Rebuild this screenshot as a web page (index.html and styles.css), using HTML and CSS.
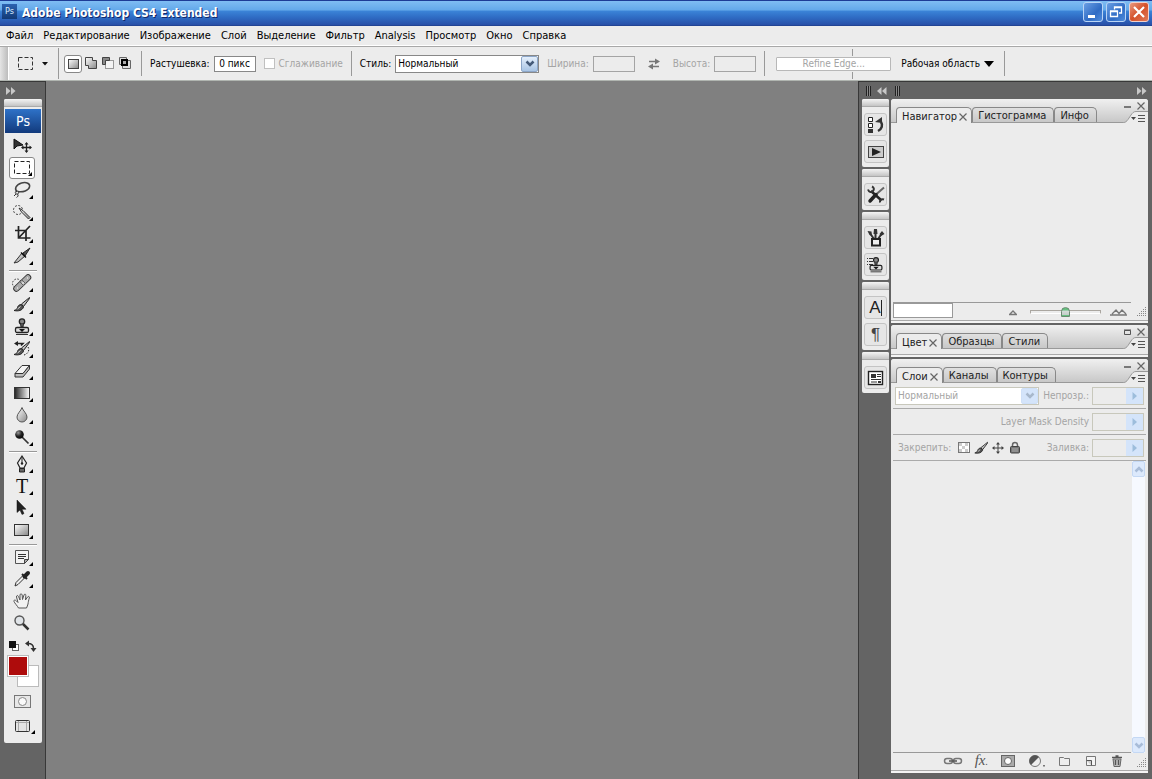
FILE: index.html
```html
<!DOCTYPE html>
<html lang="ru">
<head>
    <meta charset="UTF-8">
    <meta name="viewport" content="width=device-width, initial-scale=1.0">
    <title>Adobe Photoshop CS4 Extended</title>
    <link rel="stylesheet" href="styles.css">
</head>
<body>
    <!-- shared gradients and small symbols -->
    <svg class="defs" width="0" height="0" aria-hidden="true">
        <defs>
            <linearGradient id="metal" x1="0" y1="0" x2="1" y2="1">
                <stop offset="0" stop-color="#fff"/>
                <stop offset="1" stop-color="#888"/>
            </linearGradient>
            <linearGradient id="bw" x1="0" y1="0" x2="1" y2="0">
                <stop offset="0" stop-color="#222"/>
                <stop offset="1" stop-color="#fff"/>
            </linearGradient>
            <radialGradient id="ball" cx=".35" cy=".3" r=".8">
                <stop offset="0" stop-color="#999"/>
                <stop offset=".5" stop-color="#222"/>
                <stop offset="1" stop-color="#000"/>
            </radialGradient>
        </defs>
        <symbol id="i-brush" viewBox="0 0 22 22">
            <path d="M18.500 3.500L10.500 10l2 2.500 6-8z" fill="url(#metal)" stroke="#222"/>
            <path d="M10.500 10.500c-2 0-3.500 1-4 3-.5 1.500-1.500 2.500-3.500 3 4 1 8.500 0 9.500-3.500z" fill="#555" stroke="#222"/>
            <path d="M6.500 15l3-2.500" stroke="#ddd"/>
        </symbol>
        <symbol id="i-stamp" viewBox="0 0 22 22">
            <circle cx="11" cy="5.500" r="2.700" fill="#888" stroke="#222" stroke-width="1.300"/>
            <path d="M9.500 8l.5 3h2l.5-3" fill="#555" stroke="#333"/>
            <rect x="4.500" y="11.500" width="13" height="5" rx="1.500" fill="#ddd" stroke="#222" stroke-width="1.300"/>
            <path d="M8 13h6l-3 3z" fill="#111"/>
            <path d="M5 18.500h12" stroke="#333"/>
        </symbol>
        <symbol id="i-menu" viewBox="0 0 26 12">
            <path d="M0 11.500h1.500c2 0 3-1 4.500-3l3-4.500C10.500 2 11.500 .5 14 .5h12V12H0z" fill="#ececec"/>
            <path d="M0 11.500h1.500c2 0 3-1 4.500-3l3-4.500C10.500 2 11.500 .5 14 .5h12" fill="none" stroke="#999"/>
            <path d="M9 6h5l-2.500 3z" fill="#444"/>
            <path d="M16 4.500h7M16 7.500h7M16 10.500h7" stroke="#555"/>
        </symbol>
        <symbol id="i-min" viewBox="0 0 8 8"><path d="M0 5h7" stroke="#555" stroke-width="1.500"/></symbol>
        <symbol id="i-max" viewBox="0 0 8 8"><path d="M.5 2.500h6v4h-6zM0 2h7" fill="none" stroke="#555"/></symbol>
        <symbol id="i-x" viewBox="0 0 8 8"><path d="M.5 .5l7 7M7.500 .5l-7 7" stroke="#666" stroke-width="1.200"/></symbol>
        <symbol id="i-chev" viewBox="0 0 10 7"><path d="M1.500 1.500L5 5l3.500-3.500" fill="none" stroke="currentColor" stroke-width="2.500"/></symbol>
        <symbol id="i-right" viewBox="0 0 6 8"><path d="M.5 0L5 4 .5 8z" fill="#9dbddc"/></symbol>
        <symbol id="i-grow" viewBox="0 0 10 10"><path d="M9.500 0v10M7.500 2v8M5.500 4v6M3.500 6v4M1.500 8v2" stroke="#888" stroke-dasharray="1 1"/></symbol>
        <symbol id="i-fwd" viewBox="0 0 10 8"><path d="M0 0l4.500 4L0 8zM5 0l4.500 4L5 8z" fill="#c8c8c8"/></symbol>
        <symbol id="i-back" viewBox="0 0 10 8"><path d="M4.500 0L0 4l4.500 4zM9.500 0L5 4l4.500 4z" fill="#c8c8c8"/></symbol>
    </svg>

    <div class="app">
        <header class="titlebar">
            <span class="app-icon">Ps</span>
            <h1>Adobe Photoshop CS4 Extended</h1>
            <div class="window-buttons">
                <button class="win-btn" aria-label="Свернуть"><svg width="14" height="14"><path d="M2 11.500h7" stroke="#fff" stroke-width="3"/></svg></button>
                <button class="win-btn" aria-label="Восстановить"><svg width="14" height="14"><path d="M5.500 4.500V2h7v6H10M5 2.500h8" fill="none" stroke="#fff" stroke-width="1.300"/><path d="M1.500 6.500h7v5h-7zM1 6h8" fill="none" stroke="#fff" stroke-width="1.300"/></svg></button>
                <button class="win-btn close" aria-label="Закрыть"><svg width="14" height="14"><path d="M2 2l10 10M12 2L2 12" stroke="#fff" stroke-width="2.200"/></svg></button>
            </div>
        </header>

        <nav class="menubar">
            <button>Файл</button>
            <button>Редактирование</button>
            <button>Изображение</button>
            <button>Слой</button>
            <button>Выделение</button>
            <button>Фильтр</button>
            <button>Analysis</button>
            <button>Просмотр</button>
            <button>Окно</button>
            <button>Справка</button>
        </nav>

        <div class="options">
            <span class="handle"></span>
            <button class="preset" aria-label="Набор инструментов">
                <svg width="32" height="16"><rect x="1.500" y="1.500" width="14" height="12" fill="none" stroke="#333" stroke-dasharray="4 2"/><path d="M25 6h6l-3 3.500z" fill="#111"/></svg>
            </button>
            <div class="modes">
                <button class="mode on" aria-label="Новая область"><svg width="14" height="14"><rect x="2.500" y="2.500" width="10" height="9" fill="url(#metal)" stroke="#444"/></svg></button>
                <button class="mode" aria-label="Добавить"><svg width="14" height="14"><path d="M1.500 .5h7v3h4v8h-8v-3h-3z" fill="url(#metal)" stroke="#444"/></svg></button>
                <button class="mode" aria-label="Вычесть"><svg width="14" height="14"><rect x="4.500" y="3.500" width="8" height="8" fill="#f4f4f4" stroke="#999"/><path d="M1.500 7.500v-7h7v3h-4v4z" fill="#888" stroke="#444"/></svg></button>
                <button class="mode" aria-label="Пересечь"><svg width="14" height="14"><path d="M1.500 .5h7v7h-7zM4.500 3.500h8v8h-8z" fill="#ddd" stroke="#666"/><rect x="4" y="3" width="5" height="5" fill="#aaa" stroke="#000" stroke-width="2"/></svg></button>
            </div>
            <div class="group">
                <label for="feather">Растушевка:</label>
                <input class="box filled" id="feather" type="text" value="0 пикс">
                <input class="check" id="alias" type="checkbox" disabled>
                <label class="off" for="alias">Сглаживание</label>
            </div>
            <div class="group">
                <label for="style">Стиль:</label>
                <span class="combo">
                    <select id="style"><option>Нормальный</option></select>
                    <span class="drop"><svg width="10" height="7"><use href="#i-chev"/></svg></span>
                </span>
                <label class="off" for="w">Ширина:</label>
                <input class="box" id="w" type="text" disabled>
                <button class="swap" aria-label="Поменять местами"><svg width="14" height="12"><path d="M2 3.500h7M5 8.500h7" stroke="#777" stroke-width="1.500"/><path d="M8 .5l5 3-5 3zM6 5.500l-5 3 5 3z" fill="#777"/></svg></button>
                <label class="off" for="h">Высота:</label>
                <input class="box" id="h" type="text" disabled>
            </div>
            <div class="group edge">
                <button class="refine" disabled>Refine Edge...</button>
                <button class="workspace">Рабочая область <svg width="10" height="6"><path d="M0 0h10L5 6z" fill="#000"/></svg></button>
            </div>
        </div>

        <div class="main">
            <aside class="left-dock">
                <button class="dock-head" aria-label="Развернуть"><svg width="10" height="8"><use href="#i-fwd"/></svg></button>
                <div class="toolbox">
                    <div class="grip"></div>
                    <div class="ps">Ps</div>
                    <div class="tools">
                        <button class="tool" aria-label="Перемещение"><svg width="22" height="22"><path d="M3 4v10l3-3 6-1z" fill="#333" stroke="#111"/><path d="M15.500 8v9M11 12.500h9" stroke="#222" stroke-width="1.300"/><path d="M15.500 7l2 2.500h-4zM15.500 18l2-2.500h-4zM10 12.500l2.500-2v4zM21 12.500l-2.500-2v4z" fill="#222"/></svg></button>
                        <button class="tool more on" aria-label="Прямоугольная область"><svg width="22" height="22"><rect x="3.500" y="4.500" width="15" height="12" fill="none" stroke="#222" stroke-dasharray="4 2"/></svg></button>
                        <button class="tool more" aria-label="Лассо"><svg width="22" height="22"><path d="M6 13C3 10 5 5.500 10.500 4c5-1.300 9 .7 8 4-1 3.500-6.500 5.500-11.500 4.500" fill="none" stroke="#444" stroke-width="1.500"/><path d="M6 12c-2 0-2.500 3 0 3s2-3 0-3zm.5 3c1.500 1.500 0 3-1 3.500M5 15l-2 2" fill="none" stroke="#333"/></svg></button>
                        <button class="tool more" aria-label="Быстрое выделение"><svg width="22" height="22"><circle cx="7" cy="9" r="4.500" fill="none" stroke="#444" stroke-dasharray="2 1.500"/><path d="M8 7l4 2.500 7 7-1.500 1.500-7-7z" fill="url(#metal)" stroke="#333"/></svg></button>
                        <button class="tool more" aria-label="Рамка"><svg width="22" height="22"><path d="M7.500 3v12h12M4 7.500h11V18M19 3L8 14.500" fill="none" stroke="#222" stroke-width="1.700"/></svg></button>
                        <button class="tool more" aria-label="Раскройка"><svg width="22" height="22"><path d="M19 3l-7 5 2 3z" fill="#555" stroke="#222"/><path d="M11 8L3 18l4-1 7-6z" fill="url(#metal)" stroke="#333"/><path d="M10 7.500l5 5" stroke="#111" stroke-width="1.500"/></svg></button>
                        <hr>
                        <button class="tool more" aria-label="Восстанавливающая кисть"><svg width="22" height="22"><circle cx="6" cy="11.500" r="4.500" fill="none" stroke="#333" stroke-dasharray="1.500 1.500"/><path d="M5.500 16.500L17 5.500" stroke="#333" stroke-width="6.500" stroke-linecap="round"/><path d="M5.500 16.500L17 5.500" stroke="#aaa" stroke-width="4.700" stroke-linecap="round"/><path d="M9 10l4 4M11 8l4 4" stroke="#666"/><path d="M11 11h2M6 16h1M16 6h1" stroke="#fff"/></svg></button>
                        <button class="tool more" aria-label="Кисть"><svg width="22" height="22"><use href="#i-brush"/></svg></button>
                        <button class="tool more" aria-label="Штамп"><svg width="22" height="22"><use href="#i-stamp"/></svg></button>
                        <button class="tool more" aria-label="Архивная кисть"><svg width="22" height="22"><use href="#i-brush"/><path d="M5 5.500h7l-2 2" fill="none" stroke="#222" stroke-width="1.500"/><path d="M3 5.500L7 3v5z" fill="#222"/><path d="M17 9c2 3 0 7-4 8" fill="none" stroke="#222" stroke-dasharray="1.500 1.500"/></svg></button>
                        <button class="tool more" aria-label="Ластик"><svg width="22" height="22"><path d="M4 13.500L11 5.500h7.500L12 13.500z" fill="#f4f4f4" stroke="#333"/><path d="M4 13.500h8l6.500-8v3.500L12 17H4z" fill="#bbb" stroke="#333"/></svg></button>
                        <button class="tool more" aria-label="Градиент"><svg width="22" height="22"><rect x="3.500" y="5.500" width="15" height="11" fill="url(#bw)" stroke="#333"/></svg></button>
                        <button class="tool more" aria-label="Размытие"><svg width="22" height="22"><path d="M11 3.500c1 3.500 5 6 5 9.500a5 5 0 0 1-10 0c0-3.500 4-6 5-9.500z" fill="url(#metal)" stroke="#555"/></svg></button>
                        <button class="tool more" aria-label="Осветлитель"><svg width="22" height="22"><path d="M11 11l6.500 6.500" stroke="#333" stroke-width="1.700"/><circle cx="8.500" cy="8.500" r="4.300" fill="url(#ball)"/></svg></button>
                        <hr>
                        <button class="tool more" aria-label="Перо"><svg width="22" height="22"><path d="M11 3L6.500 10 9 15h4l2.500-5z" fill="#eee" stroke="#222" stroke-width="1.200"/><path d="M11 4v6" stroke="#222"/><circle cx="11" cy="10.500" r="1.200" fill="#222"/><path d="M8.500 15.500h5V19h-5z" fill="#666" stroke="#222"/></svg></button>
                        <button class="tool more type" aria-label="Горизонтальный текст">T</button>
                        <button class="tool more" aria-label="Выделение контура"><svg width="22" height="22"><path d="M6 3v12.500l3-2.500 2 4.500 2-1-2-4.300h4z" fill="#222" stroke="#111" stroke-width=".5"/></svg></button>
                        <button class="tool more" aria-label="Прямоугольник"><svg width="22" height="22"><rect x="3.500" y="5.500" width="14" height="11" fill="url(#metal)" stroke="#333"/></svg></button>
                        <hr>
                        <button class="tool more" aria-label="Комментарий"><svg width="22" height="22"><path d="M4.500 4.500h13v9l-4 4h-9z" fill="#f2f2f2" stroke="#555"/><path d="M7 8.500h8M7 10.500h8M7 12.500h6" stroke="#333"/><path d="M17.500 13.500h-4v4z" fill="#aaa" stroke="#444"/></svg></button>
                        <button class="tool more" aria-label="Пипетка"><svg width="22" height="22"><path d="M4 18l1-3.500 7-7 2 2-7 7z" fill="#eee" stroke="#333"/><path d="M11 6l5 5" stroke="#222" stroke-width="2"/><path d="M13.500 8.500l3.500-3.500" stroke="#222" stroke-width="4" stroke-linecap="round"/></svg></button>
                        <button class="tool" aria-label="Рука"><svg width="22" height="22"><path d="M7.500 18c-1-2-4-5-4.500-6.500s1-2 2.500-.5l1.500 1.500L5.500 7c-.3-1.700 1.500-2 2-.5L9 10V5c0-1.500 2-1.500 2.200 0l.3 4.500L13 5c.5-1.500 2-1 1.800.5L14.500 10l2-3c1-1.200 2.300-.5 1.800 1-.8 2.500-1 4-1.300 6-.3 1.500-1 2.500-1.500 4z" fill="#f2f2f2" stroke="#555"/></svg></button>
                        <button class="tool" aria-label="Масштаб"><svg width="22" height="22"><path d="M11.500 11.500l6 6" stroke="#333" stroke-width="2.500"/><circle cx="8.500" cy="8.500" r="4.500" fill="#e0e4e8" stroke="#555" stroke-width="1.400"/></svg></button>
                    </div>
                    <div class="mini">
                        <button aria-label="Цвета по умолчанию"><svg width="12" height="12"><rect x="4.500" y="4.500" width="6" height="6" fill="#fff" stroke="#666"/><rect x="1" y="1" width="7" height="7" fill="#111"/></svg></button>
                        <button aria-label="Поменять цвета"><svg width="12" height="12"><path d="M3 3.500c4 0 5.500 1.500 5.500 5" fill="none" stroke="#333" stroke-width="1.500"/><path d="M0 3.500L4 .5v6zM8.500 12L5.500 8h6z" fill="#333"/></svg></button>
                    </div>
                    <div class="swatches">
                        <button class="bg" aria-label="Фоновый цвет"></button>
                        <button class="fg" aria-label="Основной цвет"></button>
                    </div>
                    <button class="wide" aria-label="Быстрая маска"><svg width="18" height="14"><rect x=".5" y=".5" width="16" height="12" fill="#e8e8e8" stroke="#777"/><circle cx="8.500" cy="6.500" r="4" fill="#fafafa" stroke="#888"/></svg></button>
                    <button class="wide tool more" aria-label="Режим экрана"><svg width="18" height="14"><rect x="1.500" y="1.500" width="14" height="11" rx="1" fill="#e4e4e4" stroke="#333"/><path d="M2 3.500h13M4.500 2v10M12.500 2v10" stroke="#aaa"/></svg></button>
                </div>
            </aside>

            <main class="canvas"></main>

            <aside class="right-dock">
                <div class="icons-col">
                    <div class="dock-head"><span class="bars"></span><svg width="10" height="8"><use href="#i-back"/></svg></div>
                    <div class="icon-group">
                        <div class="grip"></div>
                        <button aria-label="История"><svg width="20" height="20"><path d="M2.500 2.500h4v4h-4zM2.500 8.500h4v4h-4z" fill="#fff" stroke="#222"/><rect x="2" y="14" width="5" height="4" fill="#333"/><path d="M12 16c4-2 5-6 3-9" fill="none" stroke="#333" stroke-width="2.500"/><path d="M9 7l7-5v6z" fill="#333"/></svg></button>
                        <button aria-label="Операции"><svg width="20" height="20"><rect x="2.500" y="4.500" width="15" height="11" fill="#ccc" stroke="#444"/><path d="M6 6l9 4-9 4z" fill="#222"/></svg></button>
                    </div>
                    <div class="icon-group">
                        <div class="grip"></div>
                        <button aria-label="Наборы инструментов"><svg width="20" height="20"><path d="M5 6l10 9" stroke="#222" stroke-width="2.500"/><path d="M2 4.500c1 3 3.500 3 5 1.500s1-3.500-1-4.500M14 17.500c-.5-2 1.500-4 4-3" fill="none" stroke="#333" stroke-width="2"/><path d="M18 2.500l-8 7" stroke="#666" stroke-width="2"/><path d="M10 9.500l-6 6.500" stroke="#222" stroke-width="3.500" stroke-linecap="round"/></svg></button>
                    </div>
                    <div class="icon-group">
                        <div class="grip"></div>
                        <button aria-label="Кисти"><svg width="20" height="20"><path d="M9.500 11V4M8 11L4.500 6M12 11l3.500-5" stroke="#333" stroke-width="2"/><path d="M8 1h3l.5 5h-4zM1.500 3l4 .5.500 4.500-2.500-1zM16 3l2.500 3-3.500 2-1.500-2z" fill="#333"/><path d="M6 11h8v6.500H6z" fill="#eee" stroke="#222" stroke-width="2"/></svg></button>
                        <button aria-label="Источник клонов"><svg width="20" height="20"><use href="#i-stamp"/><path d="M1 3.500h1M3 3.500h4M1 6.500h1M3 6.500h4M1 9.500h1M3 9.500h4" stroke="#333"/></svg></button>
                    </div>
                    <div class="icon-group">
                        <div class="grip"></div>
                        <button class="letter" aria-label="Символ">A<i></i></button>
                        <button class="pilcrow" aria-label="Абзац">¶</button>
                    </div>
                    <div class="icon-group">
                        <div class="grip"></div>
                        <button aria-label="Композиции слоев"><svg width="20" height="20"><rect x="2.500" y="3.500" width="14" height="13" fill="#fff" stroke="#222" stroke-width="1.400"/><rect x="5" y="6" width="5" height="4" fill="#333"/><path d="M11 6.500h4M11 8.500h4M5 11.500h10M5 14h6" stroke="#333"/><path d="M12 14h3" stroke="#333" stroke-width="2"/></svg></button>
                    </div>
                </div>

                <div class="panels-col">
                    <div class="dock-head"><span class="bars"></span><svg class="end" width="10" height="8"><use href="#i-fwd"/></svg></div>

                    <section class="panel navigator">
                        <div class="panel-head">
                            <div class="tabs">
                                <button class="tab on">Навигатор <svg width="8" height="8"><use href="#i-x"/></svg></button>
                                <button class="tab">Гистограмма</button>
                                <button class="tab">Инфо</button>
                            </div>
                            <div class="panel-ctl">
                                <span><svg width="8" height="8"><use href="#i-min"/></svg><svg width="8" height="8"><use href="#i-x"/></svg></span>
                                <svg width="26" height="12"><use href="#i-menu"/></svg>
                            </div>
                        </div>
                        <div class="preview"></div>
                        <div class="nav-foot">
                            <input class="zoom" type="text" aria-label="Масштаб">
                            <svg class="hill" width="10" height="8"><path d="M1 6.500h8M2 6l3-3 3 3" fill="none" stroke="#777" stroke-width="1.300"/></svg>
                            <input class="slider" type="range" aria-label="Масштаб просмотра">
                            <svg class="hill" width="18" height="8"><path d="M0 7h17M2 6l4-4 3 3.500L12 2l4 4" fill="none" stroke="#777" stroke-width="1.300"/></svg>
                            <svg class="grow" width="10" height="10"><use href="#i-grow"/></svg>
                        </div>
                    </section>

                    <section class="panel">
                        <div class="panel-head">
                            <div class="tabs">
                                <button class="tab on">Цвет <svg width="8" height="8"><use href="#i-x"/></svg></button>
                                <button class="tab">Образцы</button>
                                <button class="tab">Стили</button>
                            </div>
                            <div class="panel-ctl">
                                <span><svg width="8" height="8"><use href="#i-max"/></svg><svg width="8" height="8"><use href="#i-x"/></svg></span>
                                <svg width="26" height="12"><use href="#i-menu"/></svg>
                            </div>
                        </div>
                    </section>

                    <section class="panel layers">
                        <div class="panel-head">
                            <div class="tabs">
                                <button class="tab on">Слои <svg width="8" height="8"><use href="#i-x"/></svg></button>
                                <button class="tab">Каналы</button>
                                <button class="tab">Контуры</button>
                            </div>
                            <div class="panel-ctl">
                                <span><svg width="8" height="8"><use href="#i-min"/></svg><svg width="8" height="8"><use href="#i-x"/></svg></span>
                                <svg width="26" height="12"><use href="#i-menu"/></svg>
                            </div>
                        </div>
                        <div class="row">
                            <span class="combo pale">
                                <select aria-label="Режим наложения" disabled><option>Нормальный</option></select>
                                <span class="drop"><svg width="10" height="7"><use href="#i-chev"/></svg></span>
                            </span>
                            <label class="push" for="opacity">Непрозр.:</label>
                            <span class="stepper"><input id="opacity" type="text" disabled><span><svg width="6" height="8"><use href="#i-right"/></svg></span></span>
                        </div>
                        <div class="row">
                            <label class="push" for="density">Layer Mask Density</label>
                            <span class="stepper"><input id="density" type="text" disabled><span><svg width="6" height="8"><use href="#i-right"/></svg></span></span>
                        </div>
                        <div class="row">
                            <span class="lock-label">Закрепить:</span>
                            <div class="locks">
                                <svg width="14" height="14"><rect x="1.500" y="1.500" width="11" height="10" fill="#fff" stroke="#777"/><path d="M2 2h3v3H2zM8 2h3v3H8zM5 5h3v3H5zM2 8h3v3H2zM8 8h3v3H8z" fill="#ccc"/></svg>
                                <svg width="14" height="14" viewBox="2 2 17 17"><use href="#i-brush" width="22" height="22"/></svg>
                                <svg width="14" height="14"><path d="M7 2v10M2 7h10" stroke="#444"/><path d="M7 1l2 2.500H5zM7 13l2-2.500H5zM1 7l2.500-2v4zM13 7l-2.500-2v4z" fill="#444"/></svg>
                                <svg width="14" height="14"><path d="M4.500 6V4a2.500 2.500 0 0 1 5 0v2" fill="none" stroke="#666" stroke-width="1.500"/><rect x="2.500" y="5.500" width="9" height="6.500" rx="1" fill="#777" stroke="#444"/><path d="M4 8h6M4 10h6" stroke="#aaa"/></svg>
                            </div>
                            <label class="push" for="fill">Заливка:</label>
                            <span class="stepper"><input id="fill" type="text" disabled><span><svg width="6" height="8"><use href="#i-right"/></svg></span></span>
                        </div>
                        <div class="layer-list">
                            <div class="scroll">
                                <button class="up" aria-label="Вверх"><svg width="10" height="7"><use href="#i-chev"/></svg></button>
                                <button aria-label="Вниз"><svg width="10" height="7"><use href="#i-chev"/></svg></button>
                            </div>
                        </div>
                        <div class="layer-foot">
                            <button aria-label="Связать слои"><svg width="20" height="14"><rect x="1.500" y="4.500" width="8" height="5" rx="2.500" fill="none" stroke="#777" stroke-width="1.500"/><rect x="10.500" y="4.500" width="8" height="5" rx="2.500" fill="none" stroke="#777" stroke-width="1.500"/><path d="M6 7h8" stroke="#555" stroke-width="1.500"/></svg></button>
                            <button class="fx" aria-label="Стиль слоя">fx<small>.</small></button>
                            <button aria-label="Добавить маску"><svg width="16" height="14"><rect x="1.500" y="1.500" width="13" height="11" fill="#aaa" stroke="#666"/><circle cx="8" cy="7" r="3.500" fill="#fff" stroke="#666"/></svg></button>
                            <button aria-label="Корректирующий слой"><svg width="18" height="14"><circle cx="7" cy="7" r="5.500" fill="#eee" stroke="#777"/><path d="M3 11A5.500 5.500 0 0 1 11 3z" fill="#555"/><path d="M15 11h2v1.500h-2z" fill="#777"/></svg></button>
                            <button aria-label="Новая группа"><svg width="14" height="14"><path d="M1.500 3.500h4l1 1h5v7h-10z" fill="#eee" stroke="#777"/></svg></button>
                            <button aria-label="Новый слой"><svg width="14" height="14"><path d="M2.500 2.500h9v9h-9z" fill="#f4f4f4" stroke="#777"/><path d="M2.500 6.500h5v5" fill="#ccc" stroke="#555"/></svg></button>
                            <button aria-label="Удалить"><svg width="14" height="14"><path d="M3 5h8l-1 7.500H4z" fill="#bbb" stroke="#666"/><path d="M2 3.500h10M5.500 2h3M5.500 6v5M8.500 6v5" stroke="#555" stroke-width="1.300"/></svg></button>
                            <svg class="grow" width="10" height="10"><use href="#i-grow"/></svg>
                        </div>
                    </section>
                </div>
            </aside>
        </div>
    </div>
</body>
</html>
```
FILE: styles.css
```css
* {
    box-sizing: border-box;
}
body {
    margin: 0;
    font-family: "DejaVu Sans Condensed", "DejaVu Sans", sans-serif;
    font-size: 11px;
    line-height: 14px;
    color: #000;
    background: #808080;
    white-space: nowrap;
}
button,
input,
select {
    font: inherit;
    color: inherit;
    margin: 0;
    padding: 0;
    border: 0;
    border-radius: 0;
    background: none;
}
svg {
    display: block;
    flex: none;
}
.defs {
    position: absolute;
}
.app {
    display: flex;
    flex-direction: column;
    height: 100vh;
    overflow: hidden;
}

/* title bar */
.titlebar {
    flex: none;
    display: flex;
    align-items: flex-start;
    height: 26px;
    padding: 1px 3px 0 2px;
    border-top: 1px solid #1d3c96;
    background: linear-gradient(#7fbdf3, #64a9ea 35%, #3a82d6 42%, #2f6cc4 65%, #2850a8 95%, #1d3c86);
}
.app-icon {
    width: 15px;
    height: 15px;
    margin: 2px 5px 0 0;
    background: linear-gradient(#2c62b0, #123a76);
    color: #dcebfb;
    font-size: 9px;
    line-height: 14px;
    text-align: center;
}
.titlebar h1 {
    flex: 1;
    margin: 3px 0 0;
    font-size: 12px;
    line-height: 16px;
    color: #fff;
    text-shadow: 1px 1px 0 #12286a;
}
.window-buttons {
    display: flex;
    gap: 3px;
}
.win-btn {
    width: 20px;
    height: 20px;
    padding: 2px;
    border: 1px solid #b9d4f5;
    border-radius: 3px;
    background: linear-gradient(135deg, #6a9fe4, #2f6bc4 60%, #4f8cdc);
}
.win-btn.close {
    background: linear-gradient(135deg, #e89a80, #d4512a 50%, #e07a58);
    border-color: #f0d0cc;
}

/* menu */
.menubar {
    flex: none;
    display: flex;
    gap: 10px;
    height: 20px;
    padding: 2px 6px;
    background: #ececec;
    border-bottom: 1px solid #fff;
}

/* options bar */
.options {
    flex: none;
    display: flex;
    align-items: center;
    height: 35px;
    border-top: 1px solid #a8a8a8;
    border-bottom: 1px solid #b0b5b0;
    background: #ececec;
    font-size: 10px;
    line-height: 14px;
}
.handle {
    width: 9px;
    height: 100%;
    background: linear-gradient(90deg, #e4e4e4, #bcbcbc);
    border-right: 1px solid #fff;
}
.preset {
    display: flex;
    align-items: center;
    width: 50px;
    height: 31px;
    padding-left: 8px;
    border-right: 1px solid #999;
}
.modes {
    display: flex;
    gap: 1px;
    padding-left: 5px;
    margin-right: 8px;
}
.mode {
    display: flex;
    justify-content: center;
    align-items: center;
    width: 16px;
    height: 18px;
}
.mode.on {
    width: 18px;
    border: 1px solid #888;
    border-radius: 3px;
    background: #fff;
}
.group {
    display: flex;
    align-items: center;
    gap: 4px;
    height: 25px;
    padding: 0 8px;
    border-left: 1px solid #999;
}
.off,
.refine {
    color: #a4a4a4;
}
.box {
    width: 42px;
    height: 16px;
    border: 1px solid #a4a4a4;
    text-align: center;
}
.box.filled {
    background: #fff;
    border-color: #888;
}
.check {
    appearance: none;
    width: 11px;
    height: 11px;
    margin-left: 4px;
    border: 1px solid #c0c0c0;
    background: #fff;
}
.combo {
    display: flex;
    width: 144px;
    height: 18px;
    margin-right: 4px;
    border: 1px solid #888;
    background: #fff;
}
.combo select {
    appearance: none;
    flex: 1;
    min-width: 0;
    padding-left: 2px;
    color: #000;
    opacity: 1;
}
.drop {
    display: flex;
    align-items: center;
    justify-content: center;
    width: 17px;
    border: 1px solid #8ca6c8;
    border-radius: 2px;
    background: linear-gradient(#e4effc, #a8c4e4);
    color: #445a78;
}
.swap {
    margin: 0 8px;
}
.edge {
    padding-left: 11px;
    gap: 10px;
}
.refine {
    position: relative;
    width: 115px;
    height: 14px;
    border: 1px solid #b8b8b8;
    border-radius: 1px;
    background: #fff;
    line-height: 12px;
}
/* divider showing above and below the button */
.refine::before,
.refine::after {
    content: "";
    position: absolute;
    left: 75px;
    height: 7px;
    border-left: 1px solid #999;
}
.refine::before {
    bottom: 14px;
}
.refine::after {
    top: 14px;
}
.workspace {
    display: flex;
    align-items: center;
    gap: 4px;
    height: 25px;
    padding-right: 10px;
    border-right: 1px solid #999;
}

/* work area */
.main {
    flex: 1;
    display: flex;
    min-height: 0;
}
.canvas {
    flex: 1;
}
.left-dock,
.right-dock {
    flex: none;
    background: #646464;
    border-top: 1px solid #383838;
}
.left-dock {
    width: 46px;
    padding-left: 4px;
    border-right: 1px solid #383838;
}
.dock-head {
    display: flex;
    align-items: center;
    gap: 6px;
    height: 17px;
    padding-left: 2px;
}
.grip {
    height: 8px;
    background: linear-gradient(#f4f4f4, #c4c4c4);
    border-bottom: 1px solid #aaa;
}
.toolbox {
    width: 38px;
    height: 644px;
    border-radius: 2px;
    overflow: hidden;
    background: #ececec;
}
.ps {
    height: 24px;
    margin: 2px 1px 0;
    background: linear-gradient(#2e72c8, #123a7c);
    color: #fff;
    font-size: 14px;
    line-height: 24px;
    text-align: center;
}
.tools {
    padding-top: 2px;
}
.tools hr {
    height: 2px;
    margin: 3px 5px 0;
    border: 0;
    border-top: 1px solid #999;
    border-bottom: 1px solid #fff;
}
.tool {
    position: relative;
    display: flex;
    align-items: center;
    justify-content: center;
    width: 26px;
    height: 22px;
    margin-left: 5px;
}
.tool.on {
    border: 1px solid #888;
    border-radius: 3px;
    background: #fff;
}
.tool.more::after {
    content: "";
    position: absolute;
    right: 2px;
    bottom: 2px;
    border-left: 4px solid transparent;
    border-bottom: 4px solid #000;
}
.type {
    font-family: "Liberation Serif", serif;
    font-size: 20px;
    line-height: 22px;
    color: #111;
}
.mini {
    display: flex;
    gap: 5px;
    padding: 6px 0 0 4px;
}
.swatches {
    position: relative;
    height: 37px;
    margin-top: 3px;
}
.swatches button {
    position: absolute;
    width: 22px;
    height: 22px;
    border: 1px solid #bbb;
}
.swatches .fg {
    left: 3px;
    top: 0;
    box-shadow: inset 0 0 0 1px #fff;
    background: #ae0c0c;
}
.swatches .bg {
    left: 13px;
    top: 10px;
    background: #fff;
}
.wide {
    display: flex;
    align-items: center;
    justify-content: center;
    width: 28px;
    height: 20px;
    margin: 0 0 4px 5px;
}

/* right side */
.right-dock {
    display: flex;
    width: 294px;
    padding: 0 4px 6px 3px;
    border-left: 1px solid #383838;
}
.bars {
    width: 5px;
    height: 10px;
    border-left: 1px solid #222;
    border-right: 1px solid #222;
    background: linear-gradient(90deg, #888 1px, #222 1px, #222 2px, #888 2px);
}
.right-dock .dock-head {
    padding-left: 4px;
}
.end {
    margin-left: auto;
}
.icons-col {
    width: 27px;
    margin-right: 2px;
}
.icon-group {
    display: flex;
    flex-direction: column;
    align-items: center;
    gap: 4px;
    margin-bottom: 2px;
    padding-bottom: 4px;
    border-radius: 2px;
    overflow: hidden;
    background: #ececec;
}
.icon-group .grip {
    align-self: stretch;
    margin-bottom: 2px;
}
.icon-group button {
    display: flex;
    align-items: center;
    justify-content: center;
    width: 23px;
    height: 23px;
    border: 1px solid #c4c4c4;
    border-radius: 3px;
    background: #e6e6e6;
}
.icon-group .letter {
    font-family: "Liberation Sans", sans-serif;
    font-size: 17px;
    color: #222;
}
.letter i {
    height: 16px;
    border-left: 1px solid #222;
}
.icon-group .pilcrow {
    font-family: "Liberation Sans", sans-serif;
    font-size: 17px;
    color: #444;
}
.panels-col {
    flex: 1;
    display: flex;
    flex-direction: column;
    min-width: 0;
}
.panels-col .dock-head {
    flex: none;
    padding-right: 1px;
}
.panel {
    flex: none;
    display: flex;
    flex-direction: column;
    margin-bottom: 2px;
    padding-bottom: 7px;
    border-radius: 3px 3px 0 0;
    background: linear-gradient(#aaa, #aaa) no-repeat 0 100% / 100% 1px, #ececec;
    overflow: hidden;
    border-bottom: 2px solid #f4f4f4;
    background-clip: padding-box;
    background-origin: padding-box;
}
.panel-head {
    flex: none;
    display: flex;
    justify-content: space-between;
    height: 24px;
    padding-left: 5px;
    background: linear-gradient(#f0f0f0, #c8c8c8);
    border-bottom: 1px solid #999;
}
.tabs {
    display: flex;
    align-items: flex-end;
}
.tab {
    display: flex;
    align-items: center;
    gap: 2px;
    height: 15px;
    padding: 2px 7px 0 5px;
    border: 1px solid #888;
    border-bottom: 0;
    border-radius: 4px 5px 0 0;
    background: linear-gradient(#e0e0e0, #c8c8c8);
    color: #222;
}
.tab.on {
    height: 16px;
    margin-bottom: -1px;
    padding-right: 4px;
    background: #ececec;
}
.panel-ctl {
    display: flex;
    flex-direction: column;
    justify-content: space-between;
    align-items: flex-end;
    margin-bottom: -1px;
    padding-top: 3px;
}
.panel-ctl span {
    display: flex;
    gap: 5px;
    padding-right: 3px;
}
.panel:not(.navigator):not(.layers) {
    padding-bottom: 6px;
}
.navigator {
    height: 224px;
    padding-bottom: 3px;
}
.preview {
    flex: 1;
}
.nav-foot {
    display: flex;
    align-items: center;
    height: 16px;
    margin-left: 2px;
    padding-right: 2px;
    background: linear-gradient(#999, #999) no-repeat 0 0 / 238px 1px;
}
.zoom {
    width: 60px;
    height: 15px;
    margin-right: 55px;
    border: 1px solid #999;
    background: #fff;
}
.hill {
    margin-top: 4px;
}
.slider {
    appearance: none;
    flex: 1;
    min-width: 0;
    height: 4px;
    margin: 3px 9px 0 12px;
    border: 1px solid #aaa6a0;
    border-bottom-color: #fff;
}
.slider::-webkit-slider-thumb {
    appearance: none;
    width: 9px;
    height: 10px;
    border: 1px solid #6a8a70;
    border-radius: 5px 5px 0 0;
    background: linear-gradient(#66c080 2px, #d4dcd8 3px, #c4ccc8 7px, #66c080 7px);
}
.grow {
    margin: 3px 0 0 8px;
}

/* layers */
.layers {
    flex: 1;
    margin: 0;
    min-height: 0;
    padding-bottom: 2px;
}
.row {
    flex: none;
    display: flex;
    align-items: center;
    gap: 3px;
    height: 26px;
    margin: 0 2px;
    padding: 0 2px;
    border-bottom: 1px solid #aaa;
    font-size: 10px;
    color: #a4a4a4;
}
.push {
    margin-left: auto;
}
.pale {
    margin: 0;
    border-color: #c8c8bc;
}
.pale select {
    color: #a4a4a4;
}
.pale .drop {
    border-color: #cfe0f8;
    background: #d4e4fa;
    color: #a8b8cc;
}
.stepper {
    display: flex;
    width: 52px;
    height: 18px;
    border: 1px solid #c8c8bc;
}
.stepper input {
    flex: 1;
    min-width: 0;
}
.stepper span {
    display: flex;
    align-items: center;
    justify-content: center;
    width: 17px;
    background: #d4e4fa;
}
.lock-label {
    padding-left: 3px;
}
.locks {
    display: flex;
    gap: 3px;
    margin-left: 3px;
}
.layer-list {
    flex: 1;
    display: flex;
    justify-content: flex-end;
    margin: 0 3px 0 2px;
    background: linear-gradient(#999, #999) no-repeat 0 100% / 238px 1px;
}
.scroll {
    display: flex;
    flex-direction: column;
    justify-content: space-between;
    width: 13px;
    background: #f6f9ff;
}
.scroll button {
    display: flex;
    align-items: center;
    justify-content: center;
    height: 16px;
    border: 1px solid #c4d8f4;
    border-radius: 2px;
    background: #dce9fc;
    color: #a8bcd8;
}
.up svg {
    transform: rotate(180deg);
}
.layer-foot {
    flex: none;
    display: flex;
    align-items: center;
    justify-content: flex-end;
    gap: 12px;
    height: 16px;
    padding-right: 2px;
}
.layer-foot .grow {
    margin-left: 0;
}
.fx {
    font-family: "Liberation Serif", serif;
    font-size: 15px;
    font-style: italic;
    color: #555;
}
.fx small {
    font-size: 10px;
}
```
